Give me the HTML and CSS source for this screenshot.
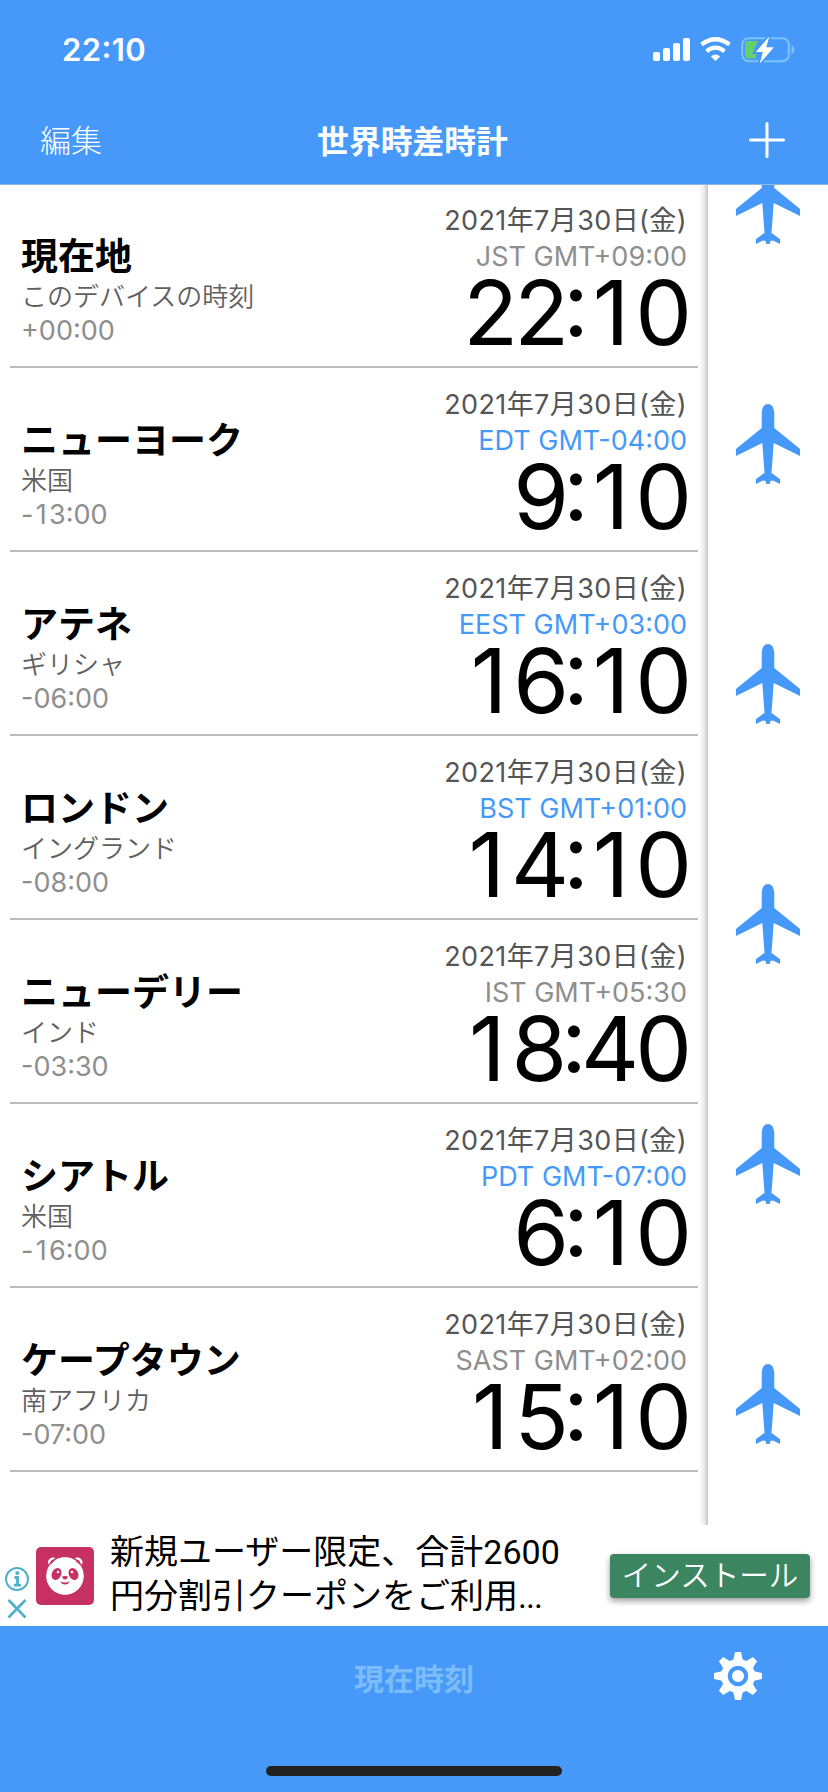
FILE: index.html
```html
<!DOCTYPE html>
<html lang="ja">
<head>
    <meta charset="UTF-8">
    <meta name="viewport" content="width=device-width, initial-scale=1.0">
    <title>世界時差時計</title>
    <link rel="stylesheet" href="styles.css">
</head>
<body>
    <header class="header">
        <div class="status-bar">
            <span class="status-time">22<span class="mini-colon">:</span>10</span>
            <svg class="status-icons" width="142" height="28" viewBox="0 0 142 28">
                <g fill="#fff">
                    <rect x="0" y="16" width="7" height="9" rx="2"/>
                    <rect x="10" y="12" width="7" height="13" rx="2"/>
                    <rect x="20" y="7" width="7" height="18" rx="2"/>
                    <rect x="30" y="2" width="7" height="23" rx="2"/>
                    <path d="M62.500 25l-4.600-4.600q4.600-3.600 9.200 0z"/>
                </g>
                <path d="M48.500 8.500q14-10.500 28 0M53.500 15.300q9-7.300 18 0" fill="none" stroke="#fff" stroke-width="4.200"/>
                <rect x="89.200" y="2.200" width="46.600" height="23" rx="6.500" fill="none" stroke="#7cc4fb" stroke-width="2"/>
                <path d="M138.500 9q6 4.700 0 9.400z" fill="#7cc4fb"/>
                <path d="M95 5h10l-4.500 9.500h4l-2 8H95q-3 0-3-3V8q0-3 3-3z" fill="#65d06b"/>
                <path d="M116 1l-13 15h7l-3 11 13.500-15.500h-7.500z" fill="#fff" stroke="#4699f8" stroke-width="4" paint-order="stroke"/>
                <path d="M116 1l-13 15h7l-3 11 13.500-15.500h-7.500z" fill="#fff"/>
            </svg>
        </div>
        <div class="nav-bar">
            <span class="nav-edit">編集</span>
            <span class="nav-title">世界時差時計</span>
            <svg class="nav-add" width="36" height="36" viewBox="0 0 36 36">
                <path d="M18 1.500v33M1.500 18h33" stroke="#fff" stroke-width="3" stroke-linecap="round"/>
            </svg>
        </div>
    </header>

    <main class="main">
        <ul class="clock-list">
            <li class="clock">
                <div class="place">
                    <div class="name">現在地</div>
                    <div class="country">このデバイスの時刻</div>
                    <div class="diff">+00:00</div>
                </div>
                <div class="info">
                    <div class="date">2021年7月30日(金)</div>
                    <div class="zone">JST GMT+09:00</div>
                    <div class="time">22<span class="colon">:</span><span class="one">1</span>0</div>
                </div>
            </li>
            <li class="clock">
                <div class="place">
                    <div class="name">ニューヨーク</div>
                    <div class="country">米国</div>
                    <div class="diff">-<span class="one">1</span>3:00</div>
                </div>
                <div class="info">
                    <div class="date">2021年7月30日(金)</div>
                    <div class="zone summer">EDT GMT-04:00</div>
                    <div class="time">9<span class="colon">:</span><span class="one">1</span>0</div>
                </div>
            </li>
            <li class="clock">
                <div class="place">
                    <div class="name">アテネ</div>
                    <div class="country">ギリシャ</div>
                    <div class="diff">-06:00</div>
                </div>
                <div class="info">
                    <div class="date">2021年7月30日(金)</div>
                    <div class="zone summer">EEST GMT+03:00</div>
                    <div class="time"><span class="one">1</span>6<span class="colon">:</span><span class="one">1</span>0</div>
                </div>
            </li>
            <li class="clock">
                <div class="place">
                    <div class="name">ロンドン</div>
                    <div class="country">イングランド</div>
                    <div class="diff">-08:00</div>
                </div>
                <div class="info">
                    <div class="date">2021年7月30日(金)</div>
                    <div class="zone summer">BST GMT+01:00</div>
                    <div class="time"><span class="one">1</span>4<span class="colon">:</span><span class="one">1</span>0</div>
                </div>
            </li>
            <li class="clock">
                <div class="place">
                    <div class="name">ニューデリー</div>
                    <div class="country">インド</div>
                    <div class="diff">-03:30</div>
                </div>
                <div class="info">
                    <div class="date">2021年7月30日(金)</div>
                    <div class="zone">IST GMT+05:30</div>
                    <div class="time"><span class="one">1</span>8<span class="colon">:</span>40</div>
                </div>
            </li>
            <li class="clock">
                <div class="place">
                    <div class="name">シアトル</div>
                    <div class="country">米国</div>
                    <div class="diff">-<span class="one">1</span>6:00</div>
                </div>
                <div class="info">
                    <div class="date">2021年7月30日(金)</div>
                    <div class="zone summer">PDT GMT-07:00</div>
                    <div class="time">6<span class="colon">:</span><span class="one">1</span>0</div>
                </div>
            </li>
            <li class="clock">
                <div class="place">
                    <div class="name">ケープタウン</div>
                    <div class="country">南アフリカ</div>
                    <div class="diff">-07:00</div>
                </div>
                <div class="info">
                    <div class="date">2021年7月30日(金)</div>
                    <div class="zone">SAST GMT+02:00</div>
                    <div class="time"><span class="one">1</span>5<span class="colon">:</span><span class="one">1</span>0</div>
                </div>
            </li>
        </ul>
        <div class="slider">
            <svg width="0" height="0" class="defs">
                <symbol id="plane" viewBox="0 0 64 80">
                    <path d="M32 0c4.500 0 6 4.500 6.300 9v15L64 45v7L37.700 39 35.500 69l8.500 6v5l-7-3.500-2.500.5L33.500 80h-3L29.500 77l-2.500-.5-7 3.500v-5l8.500-6L26.300 39 0 52v-7l25.700-21V9C26 4.500 27.500 0 32 0z"/>
                </symbol>
            </svg>
            <svg class="plane"><use href="#plane"/></svg>
            <svg class="plane"><use href="#plane"/></svg>
            <svg class="plane"><use href="#plane"/></svg>
            <svg class="plane"><use href="#plane"/></svg>
            <svg class="plane"><use href="#plane"/></svg>
            <svg class="plane"><use href="#plane"/></svg>
        </div>
    </main>

    <section class="ad">
        <svg class="ad-marks" width="26" height="54" viewBox="0 0 26 54" fill="none" stroke="#4fb0ca">
            <circle cx="12" cy="12" r="11" stroke-width="2"/>
            <path d="M9.500 10.500h3v8M9 18.200h7" stroke-width="2.800"/>
            <circle cx="12.300" cy="6" r="2" fill="#4fb0ca" stroke="none"/>
            <path d="M3.500 33l17 17.500M20.500 33L3.500 50.500" stroke-width="2.600"/>
        </svg>
        <svg class="ad-logo" width="58" height="58" viewBox="0 0 58 58">
            <rect width="58" height="58" rx="5" fill="#c63062"/>
            <g fill="#fff">
                <circle cx="17" cy="15.500" r="5"/>
                <circle cx="41.500" cy="15.500" r="5"/>
                <circle cx="29" cy="29" r="19.500" stroke="#c63062" stroke-width="1.500"/>
            </g>
            <g fill="#c63062">
                <circle cx="17" cy="15.500" r="2.400"/>
                <circle cx="41.500" cy="15.500" r="2.400"/>
            </g>
            <circle cx="29" cy="29" r="18.300" fill="#fff"/>
            <g fill="#c63062">
                <ellipse cx="20.500" cy="27" rx="4.600" ry="6.200" transform="rotate(28 20.500 27)"/>
                <ellipse cx="37.500" cy="27" rx="4.600" ry="6.200" transform="rotate(-28 37.500 27)"/>
                <path d="M26 29.500q3-1.200 6 0-.5 2.500-3 3-2.500-.5-3-3zM24.500 34.500q4.500 1.800 9 0-1 3-4.500 3t-4.500-3z"/>
            </g>
            <circle cx="22" cy="25" r="1.300" fill="#fff"/>
            <circle cx="36" cy="25" r="1.300" fill="#fff"/>
        </svg>
        <p class="ad-text">新規ユーザー限定、合計2600<br>円分割引クーポンをご利用<span class="dots">...</span></p>
        <a class="install">インストール</a>
    </section>

    <footer class="toolbar">
        <span class="now">現在時刻</span>
        <svg class="gear" width="48" height="48" viewBox="-24 -24 48 48">
            <g fill="#fff">
                <circle r="17"/>
                <path id="tooth" d="M-3-24h6l2 9h-10zM-3 24h6l2-9h-10z"/>
                <use href="#tooth" transform="rotate(45)"/>
                <use href="#tooth" transform="rotate(90)"/>
                <use href="#tooth" transform="rotate(135)"/>
            </g>
            <circle r="8.200" fill="#fff" stroke="#4699f8" stroke-width="4.200"/>
        </svg>
        <div class="home-bar"></div>
    </footer>
</body>
</html>
```
FILE: styles.css
```css
* {
    box-sizing: border-box;
}
body {
    margin: 0;
    width: 828px;
    height: 1792px;
    overflow: hidden;
    display: flex;
    flex-direction: column;
    background-color: #fff;
    font-family: Inter, "Noto Sans CJK JP", sans-serif;
    color: #000;
}
.header {
    height: 185px;
    flex: none;
    background-color: #4699f8;
    border-bottom: 1px solid #8fb4e0;
    color: #fff;
    position: relative;
    z-index: 1;
}
.status-bar {
    height: 100px;
    padding: 0 33px 0 62px;
    display: flex;
    justify-content: space-between;
    align-items: center;
}
.status-time {
    margin-top: -1px;
    font-size: 31px;
    font-weight: 600;
    letter-spacing: 0.4px;
}
.mini-colon {
    position: relative;
    top: -3px;
}
.nav-bar {
    height: 80px;
    padding: 0 43px 0 40px;
    display: grid;
    grid-template-columns: 1fr auto 1fr;
    align-items: center;
}
.nav-edit {
    margin-top: -3px;
    font-size: 31px;
    font-weight: 300;
}
.nav-title {
    margin-top: -3px;
    font-size: 31.800px;
    font-weight: 700;
}
.nav-add {
    justify-self: end;
}
.main {
    height: 1341px;
    flex: none;
    display: flex;
    margin-top: -1px;
}
.clock-list {
    width: 708px;
    margin: 0;
    padding: 0 10px;
    list-style-type: none;
    background: linear-gradient(to left, #c4c4c4, #ececec 4px, #fff 9px);
}
.clock {
    height: 184px;
    padding: 0 11px;
    display: flex;
    justify-content: space-between;
    border-bottom: 2px solid #bcbcbc;
}
.place {
    padding-top: 51px;
}
.name {
    font-size: 37px;
    font-weight: 700;
    line-height: 44px;
}
.country {
    font-size: 26px;
    font-weight: 350;
    line-height: 36px;
    color: #606060;
}
.diff {
    font-size: 27px;
    line-height: 32px;
    color: #8e8e8e;
}
.info {
    padding-top: 19px;
    text-align: right;
}
.date {
    font-size: 27px;
    line-height: 36px;
    letter-spacing: 0.4px;
    color: #555;
}
.zone {
    font-size: 27px;
    line-height: 36px;
    color: #8e8e8e;
}
.summer {
    color: #4699f8;
}
.time {
    font-size: 90px;
    line-height: 76px;
    letter-spacing: -4px;
    margin-right: -1px;
}
.colon {
    position: relative;
    top: -9px;
    display: inline-flex;
    justify-content: center;
    width: 18px;
}
.one {
    display: inline-block;
    width: 0.580em;
    text-align: center;
}
.slider {
    width: 120px;
    display: flex;
    flex-direction: column;
    align-items: center;
    gap: 160px;
    margin-top: -20px;
}
.defs {
    position: absolute;
}
.plane {
    width: 64px;
    height: 80px;
    flex: none;
    fill: #4699f8;
}
.ad {
    height: 101px;
    flex: none;
    padding: 5px 18px 0 5px;
    display: flex;
    align-items: flex-start;
}
.ad-marks {
    margin-top: 37px;
}
.ad-logo {
    margin: 17px 0 0 5px;
}
.ad-text {
    flex: 1;
    margin: 0 0 0 16px;
    font-family: Roboto, "Noto Sans CJK JP", sans-serif;
    font-size: 34px;
    line-height: 44px;
    white-space: nowrap;
}
.dots {
    letter-spacing: -1px;
}
.install {
    width: 200px;
    height: 44px;
    margin-top: 24px;
    border-radius: 4px;
    background-color: #3c8561;
    box-shadow: 0 3px 6px rgba(0, 0, 0, 0.4);
    color: #fff;
    font-size: 29.500px;
    font-weight: 350;
    line-height: 42px;
    text-align: center;
}
.toolbar {
    height: 166px;
    flex: none;
    padding: 26px 66px 16px;
    display: grid;
    grid-template-columns: 1fr auto 1fr;
    grid-template-rows: 56px 1fr;
    background-color: #4699f8;
}
.now {
    grid-column: 2;
    margin-top: 7px;
    font-size: 30px;
    font-weight: 700;
    line-height: 40px;
    color: #7dbcfa;
}
.gear {
    justify-self: end;
}
.home-bar {
    grid-column: 1 / 4;
    justify-self: center;
    align-self: end;
    width: 296px;
    height: 10px;
    border-radius: 5px;
    background-color: #222;
}
```
